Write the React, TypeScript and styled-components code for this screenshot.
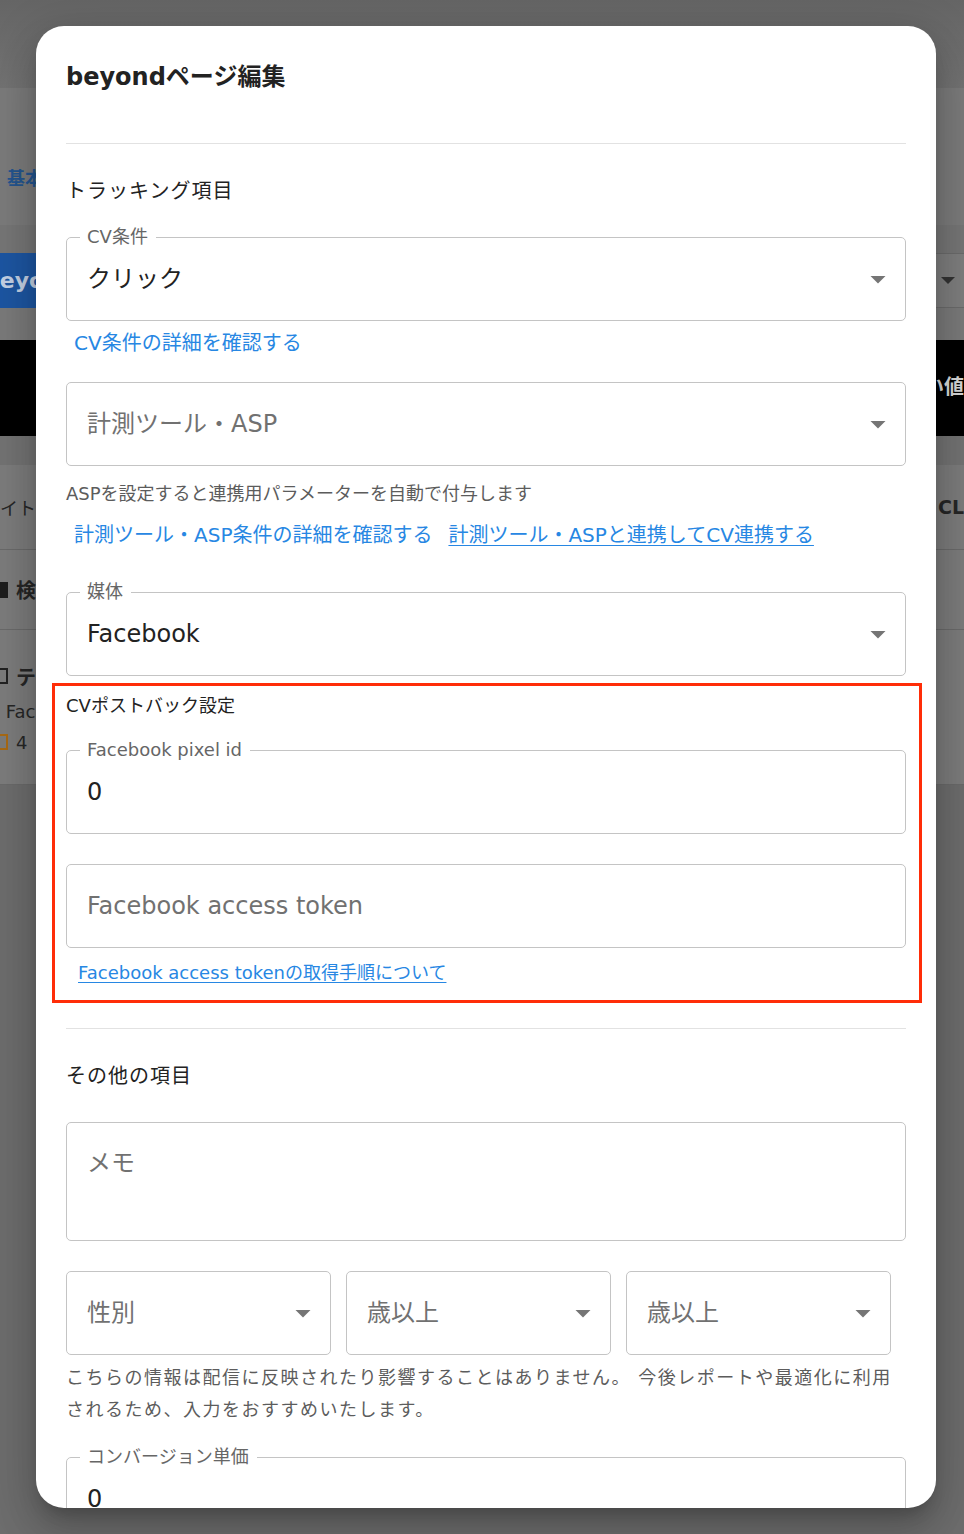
import React from "react";
import styled, { createGlobalStyle } from "styled-components";

const GlobalStyle = createGlobalStyle`
  html, body {
    margin: 0;
    padding: 0;
  }
  body {
    font-family: "DejaVu Sans", "Noto Sans CJK JP", sans-serif;
    color: #222;
    background: #6d6d6d;
    overflow: hidden;
  }
  * {
    box-sizing: border-box;
  }
`;

/* ---------- dimmed page behind the dialog ---------- */

const Backdrop = styled.div`
  position: relative;
  width: 964px;
  height: 1534px;
  overflow: hidden;
  background: #6d6d6d;
  font-family: "DejaVu Sans", "Noto Sans CJK JP", sans-serif;
`;
const TopBar = styled.div`
  height: 88px;
  background: linear-gradient(180deg, #656565 0%, #737373 100%);
`;
const TabBar = styled.div`
  height: 137px;
  display: flex;
  align-items: flex-end;
  padding: 0 0 33px 7px;
  background: #7b7b7b;
  color: #24558f;
  font-size: 18px;
  line-height: 27px;
  font-weight: 700;
`;
const Strip = styled.div<{ $h: number; $bg: string }>`
  height: ${p => p.$h}px;
  background: ${p => p.$bg};
`;
const ActionRow = styled.div`
  height: 55px;
  display: flex;
  justify-content: space-between;
  background: #7b7b7b;
`;
const PrimaryButton = styled.div`
  width: 150px;
  margin-left: -16px;
  background: #1d56a2;
  color: #c3d0e4;
  font-size: 22px;
  line-height: 55px;
  font-weight: 700;
`;
const SelectStub = styled.div`
  width: 120px;
  display: flex;
  align-items: center;
  justify-content: flex-end;
  padding-right: 9px;
  border-top: 1px solid #6b6b6b;
  border-bottom: 1px solid #6b6b6b;
  background: #7e7e7e;
`;
const Caret = styled.span`
  width: 0;
  height: 0;
  border-left: 7px solid transparent;
  border-right: 7px solid transparent;
  border-top: 7px solid #333;
`;
const TableHead = styled.div`
  height: 96px;
  display: flex;
  align-items: center;
  justify-content: flex-end;
  padding-bottom: 6px;
  background: #000;
  color: #d8d8d8;
  font-size: 20px;
  font-weight: 700;
`;
const TableRow = styled.div<{ $h: number }>`
  height: ${p => p.$h}px;
  display: flex;
  justify-content: space-between;
  align-items: center;
  background: #7c7c7c;
  border-bottom: 1px solid #6a6a6a;
  color: #262626;
`;
const RowText = styled.span<{ $bold?: boolean; $size?: number }>`
  font-size: ${p => p.$size ?? 18}px;
  font-weight: ${p => (p.$bold ? 700 : 400)};
`;
const RowStack = styled.div`
  display: flex;
  flex-direction: column;
  gap: 10px;
`;
const RowLine = styled.div`
  display: flex;
  align-items: center;
  gap: 8px;
  font-size: 18px;
`;
const Box = styled.span<{ $color: string; $filled?: boolean }>`
  width: 10px;
  height: 16px;
  margin-left: -2px;
  border: 2px solid ${p => p.$color};
  background: ${p => (p.$filled ? p.$color : "transparent")};
`;

/* ---------- dialog ---------- */

const Dialog = styled.div`
  position: absolute;
  top: 26px;
  left: 36px;
  width: 900px;
  height: 1482px;
  padding: 33px 30px 0;
  overflow: hidden;
  background: #fff;
  border-radius: 28px;
  font-family: "DejaVu Sans", "Noto Sans CJK JP", sans-serif;
  box-shadow: 0 11px 15px -7px rgba(0, 0, 0, 0.2), 0 24px 38px 3px rgba(0, 0, 0, 0.14),
    0 9px 46px 8px rgba(0, 0, 0, 0.12);
`;
const Title = styled.h2`
  margin: 0;
  font-size: 24px;
  line-height: 36px;
  font-weight: 700;
  color: #222;
`;
const Divider = styled.hr<{ $mt: number }>`
  margin: ${p => p.$mt}px 0 0;
  border: 0;
  border-top: 1px solid #e2e2e2;
`;
const SectionTitle = styled.h3`
  margin: 32px 0 0;
  font-size: 20px;
  line-height: 30px;
  font-weight: 400;
  letter-spacing: 1px;
  color: #222;
`;
const Field = styled.div<{ $mt: number; $h?: number; $top?: boolean }>`
  position: relative;
  display: flex;
  align-items: ${p => (p.$top ? "flex-start" : "center")};
  height: ${p => p.$h ?? 84}px;
  margin-top: ${p => p.$mt}px;
  padding: ${p => (p.$top ? "23px" : "0")} 9px 0 20px;
  border: 1px solid #c4c4c4;
  border-radius: 5px;
  background: #fff;
`;
const FieldLabel = styled.span`
  position: absolute;
  top: -11px;
  left: 13px;
  padding: 0 8px 0 7px;
  background: #fff;
  color: #666;
  font-size: 18px;
  line-height: 20px;
`;
const Value = styled.span<{ $placeholder?: boolean }>`
  flex: 1;
  font-size: 24px;
  line-height: 34px;
  color: ${p => (p.$placeholder ? "#717171" : "#222")};
`;
const ArrowSvg = styled.svg`
  flex: none;
  width: 36px;
  height: 36px;
  fill: #757575;
`;
const LinkRow = styled.div<{ $mt: number; $indent: number; $size: number }>`
  display: flex;
  gap: 16px;
  margin-top: ${p => p.$mt}px;
  padding-left: ${p => p.$indent}px;
  font-size: ${p => p.$size}px;
  line-height: ${p => Math.round(p.$size * 1.5)}px;
`;
const Link = styled.a<{ $underline?: boolean }>`
  color: #2787e3;
  text-decoration: ${p => (p.$underline ? "underline" : "none")};
  text-underline-offset: 3px;
  text-decoration-thickness: 1px;
  cursor: pointer;
`;
const Helper = styled.p<{ $mt: number; $lh: number; $ls?: number }>`
  margin: ${p => p.$mt}px 0 0;
  color: #5c5c5c;
  font-size: 18px;
  line-height: ${p => p.$lh}px;
  letter-spacing: ${p => p.$ls ?? 0}px;
`;
const Highlight = styled.div`
  margin: 7px -16px 0 -14px;
  padding: 6px 13px 14px 11px;
  border: 3px solid #ff2d08;
`;
const SubTitle = styled.div`
  font-size: 18px;
  line-height: 27px;
  color: #222;
`;
const SelectGrid = styled.div`
  display: grid;
  grid-template-columns: repeat(3, 265px);
  gap: 15px;
  margin-top: 30px;
`;

const Arrow: React.FC = () => (
  <ArrowSvg viewBox="0 0 24 24">
    <path d="M7 10l5 5 5-5z" />
  </ArrowSvg>
);

type SelectProps = { label?: string; value: string; placeholder?: boolean; mt?: number };

const Select: React.FC<SelectProps> = ({ label, value, placeholder, mt = 0 }) => (
  <Field $mt={mt}>
    {label && <FieldLabel>{label}</FieldLabel>}
    <Value $placeholder={placeholder}>{value}</Value>
    <Arrow />
  </Field>
);

const App: React.FC = () => {
  return (
    <>
      <GlobalStyle />
      <Backdrop>
        <TopBar />
        <TabBar>基本</TabBar>
        <Strip $h={28} $bg="#767676" />
        <ActionRow>
          <PrimaryButton>beyond</PrimaryButton>
          <SelectStub>
            <Caret />
          </SelectStub>
        </ActionRow>
        <Strip $h={32} $bg="#7a7a7a" />
        <TableHead>い値</TableHead>
        <Strip $h={29} $bg="#737373" />
        <TableRow $h={85}>
          <RowText>イト,</RowText>
          <RowText $bold $size={19}>CL</RowText>
        </TableRow>
        <TableRow $h={80}>
          <RowLine>
            <Box $color="#1e1e1e" $filled />
            <RowText $bold $size={20}>検</RowText>
          </RowLine>
        </TableRow>
        <TableRow $h={155}>
          <RowStack>
            <RowLine>
              <Box $color="#222" />
              <RowText $bold $size={20}>テ</RowText>
            </RowLine>
            <RowLine>
              <RowText>&nbsp;Fac</RowText>
            </RowLine>
            <RowLine>
              <Box $color="#a86a16" />
              <RowText>4</RowText>
            </RowLine>
          </RowStack>
        </TableRow>

        <Dialog>
          <Title>beyondページ編集</Title>
          <Divider $mt={48} />

          <SectionTitle>トラッキング項目</SectionTitle>
          <Select mt={31} label="CV条件" value="クリック" />
          <LinkRow $mt={7} $indent={8} $size={20}>
            <Link>CV条件の詳細を確認する</Link>
          </LinkRow>

          <Select mt={24} value="計測ツール・ASP" placeholder />
          <Helper $mt={14} $lh={27}>
            ASPを設定すると連携用パラメーターを自動で付与します
          </Helper>
          <LinkRow $mt={13} $indent={8} $size={20}>
            <Link>計測ツール・ASP条件の詳細を確認する</Link>
            <Link $underline>計測ツール・ASPと連携してCV連携する</Link>
          </LinkRow>

          <Select mt={42} label="媒体" value="Facebook" />

          <Highlight>
            <SubTitle>CVポストバック設定</SubTitle>
            <Field $mt={31}>
              <FieldLabel>Facebook pixel id</FieldLabel>
              <Value>0</Value>
            </Field>
            <Field $mt={30}>
              <Value $placeholder>Facebook access token</Value>
            </Field>
            <LinkRow $mt={11} $indent={12} $size={18}>
              <Link $underline>Facebook access tokenの取得手順について</Link>
            </LinkRow>
          </Highlight>

          <Divider $mt={25} />
          <SectionTitle>その他の項目</SectionTitle>
          <Field $mt={31} $h={119} $top>
            <Value $placeholder>メモ</Value>
          </Field>

          <SelectGrid>
            <Select value="性別" placeholder />
            <Select value="歳以上" placeholder />
            <Select value="歳以上" placeholder />
          </SelectGrid>
          <Helper $mt={7} $lh={32} $ls={1.5}>
            こちらの情報は配信に反映されたり影響することはありません。 今後レポートや最適化に利用
            <br />
            されるため、入力をおすすめいたします。
          </Helper>

          <Field $mt={31}>
            <FieldLabel>コンバージョン単価</FieldLabel>
            <Value>0</Value>
          </Field>
        </Dialog>
      </Backdrop>
    </>
  );
};

export default App;
